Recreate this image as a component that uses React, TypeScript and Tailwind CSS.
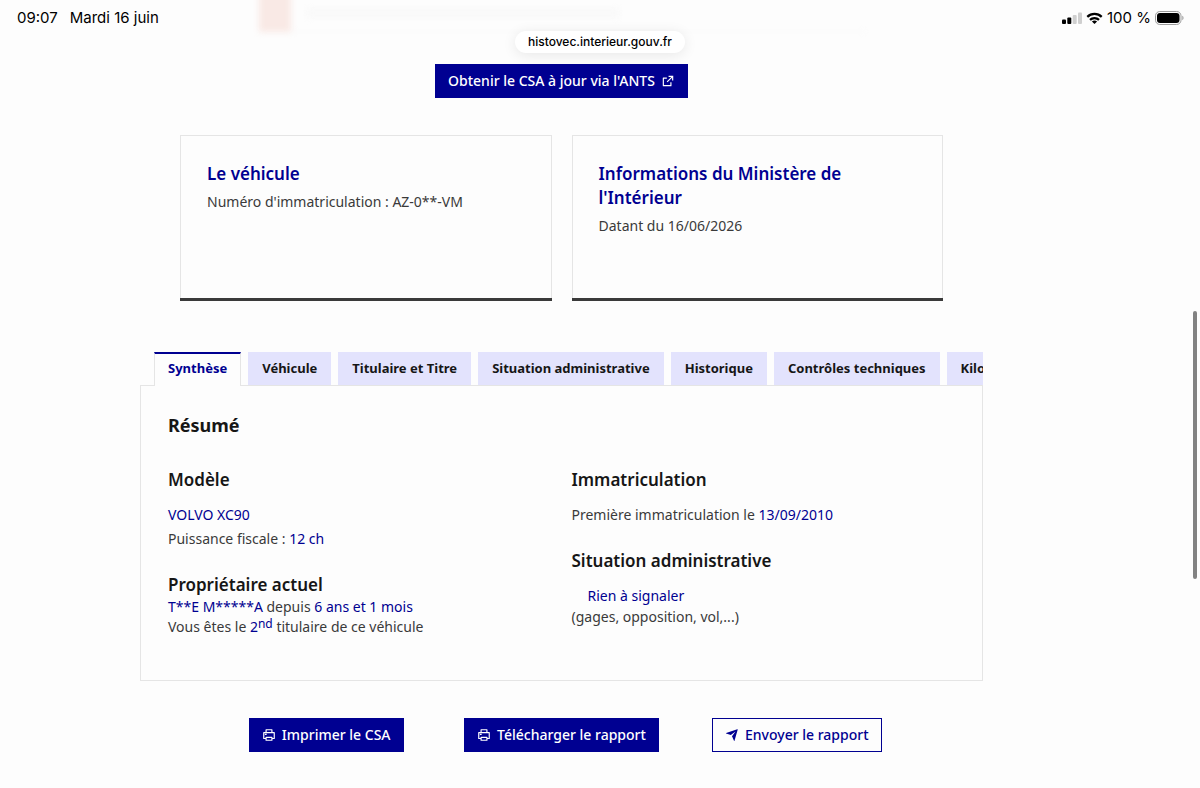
import { useState } from "react";
import type { ReactNode } from "react";

const tabs = [
  "Synthèse",
  "Véhicule",
  "Titulaire et Titre",
  "Situation administrative",
  "Historique",
  "Contrôles techniques",
  "Kilométrage",
];

function Icon({ d }: { d: string }) {
  return (
    <svg viewBox="0 0 24 24" className="mt-[2px] size-[14px] shrink-0" fill="currentColor" aria-hidden="true">
      <path d={d} />
    </svg>
  );
}

const printer =
  "M6 19H3a1 1 0 0 1-1-1V8a1 1 0 0 1 1-1h3V3a1 1 0 0 1 1-1h10a1 1 0 0 1 1 1v4h3a1 1 0 0 1 1 1v10a1 1 0 0 1-1 1h-3v2a1 1 0 0 1-1 1H7a1 1 0 0 1-1-1v-2zm0-2v-1a1 1 0 0 1 1-1h10a1 1 0 0 1 1 1v1h2V9H4v8h2zM8 4v3h8V4H8zm0 13v3h8v-3H8zm-3-7h3v2H5v-2z";
const externalLink =
  "M10 6v2H5v11h11v-5h2v6a1 1 0 0 1-1 1H4a1 1 0 0 1-1-1V7a1 1 0 0 1 1-1h6zm11-3v8h-2V6.413l-7.793 7.794-1.414-1.414L17.585 5H13V3h8z";
const sendPlane =
  "M1.946 9.315c-.522-.174-.527-.455.01-.634l19.087-6.362c.529-.176.832.12.684.638l-5.454 19.086c-.15.529-.455.547-.679.045L12 14l6-8-8 6-8.054-2.685z";

function StatusBar() {
  return (
    <div className="flex h-9 items-center justify-between pr-4 pl-[17px] font-['Inter',sans-serif] text-[15px] text-black">
      <div className="flex gap-3">
        <span>09:07</span>
        <span>Mardi 16 juin</span>
      </div>
      <div className="flex items-center gap-1">
        <svg viewBox="0 0 20 12" className="h-3 w-5" aria-hidden="true">
          <rect x="0" y="7.5" width="4" height="4.5" rx="1" />
          <rect x="5.3" y="5.5" width="4" height="6.5" rx="1" />
          <rect x="10.7" y="3" width="4" height="9" rx="1" fill="#cfcfcf" />
          <rect x="16" y="0.5" width="4" height="11.5" rx="1" fill="#cfcfcf" />
        </svg>
        <svg viewBox="0 0 17 12" className="h-3 w-[17px]" aria-hidden="true">
          <g fill="none" stroke="#000" strokeWidth="2.2">
            <path d="M1.3 4.9a10.3 10.3 0 0 1 14.4 0" />
            <path d="M4 7.9a6.4 6.4 0 0 1 9 0" />
          </g>
          <path d="M8.5 12 5.9 9.6a3.8 3.8 0 0 1 5.2 0z" />
        </svg>
        <span>100 %</span>
        <svg viewBox="0 0 29 14" className="h-[14px] w-[29px]" aria-hidden="true">
          <rect x="0.5" y="0.5" width="25.5" height="13" rx="4.3" fill="none" stroke="#9c9c9c" />
          <rect x="2" y="2" width="22.5" height="10" rx="3" />
          <path d="M27.3 4.8c1.6.5 1.6 3.9 0 4.4z" fill="#9c9c9c" />
        </svg>
      </div>
    </div>
  );
}

function Card({ title, children }: { title: string; children: ReactNode }) {
  return (
    <section className="relative min-h-[166px] border border-[#e5e5e5] px-[26px] pt-[26px] pb-8 after:absolute after:-inset-x-px after:-bottom-px after:h-[3px] after:bg-[#3a3a3a]">
      <h2 className="text-[17px] leading-6 font-semibold text-[#000091]">{title}</h2>
      <p className="mt-1 leading-6">{children}</p>
    </section>
  );
}

function Blue({ children }: { children: ReactNode }) {
  return <span className="text-[#000091]">{children}</span>;
}

const subheading = "text-[17px] leading-6 font-semibold text-[#161616]";
const button =
  "flex h-[34px] items-center gap-1.5 border border-[#000091] px-3 pb-[2px] font-medium whitespace-nowrap";

export default function App() {
  const [active, setActive] = useState(0);
  return (
    <div className="relative min-h-screen overflow-hidden bg-[#fdfdfd] font-['Noto_Sans',sans-serif] text-[14px] text-[#3a3a3a]">
      <div className="absolute -top-2 left-[259px] flex h-10 w-[607px] blur-[3px]" aria-hidden="true">
        <div className="w-8 bg-[#f9e9e5]" />
        <div className="flex-1 border-b border-[#f7f7f7] pt-[17px] pl-4">
          <div className="h-2 w-[312px] bg-[#f8f8f8]" />
        </div>
      </div>
      <header className="relative">
        <StatusBar />
        <div className="absolute top-[31px] left-1/2 -translate-x-1/2 rounded-full bg-white px-[13px] font-['Inter',sans-serif] text-[12px] leading-[22px] font-medium text-black shadow-[0_2px_14px_rgba(0,0,0,0.09)]">
          histovec.interieur.gouv.fr
        </div>
      </header>
      <div className="absolute top-[311px] right-[3px] h-[268px] w-1 rounded-full bg-[#828282]" />

      <main className="pr-[77px] pt-7 pb-9">
        <div className="mx-auto max-w-[843px]">
          <div className="flex justify-center">
            <a href="#ants" className={`${button} bg-[#000091] text-white`}>
              Obtenir le CSA à jour via l'ANTS
              <Icon d={externalLink} />
            </a>
          </div>

          <div className="mt-[37px] grid grid-cols-2 gap-5 px-10">
            <Card title="Le véhicule">Numéro d'immatriculation : AZ-0**-VM</Card>
            <Card title="Informations du Ministère de l'Intérieur">Datant du 16/06/2026</Card>
          </div>

          <div className="mt-[51px]">
            <div role="tablist" className="relative z-10 -mb-px flex gap-[7px] overflow-hidden pl-[14px] text-[13px] font-bold">
              {tabs.map((tab, i) => (
                <button
                  key={tab}
                  type="button"
                  role="tab"
                  aria-selected={i === active}
                  onClick={() => setActive(i)}
                  className={
                    i === active
                      ? "h-[34px] shrink-0 border-x border-t-2 border-x-[#e5e5e5] border-t-[#000091] bg-[#fdfdfd] px-[13px] pb-[3px] text-[#000091]"
                      : "mb-px h-[33px] shrink-0 bg-[#e3e3fd] px-[14px] text-[#161616]"
                  }
                >
                  {tab}
                </button>
              ))}
            </div>

            <div role="tabpanel" className="min-h-[296px] border border-[#e5e5e5] px-[27px] pt-[23px] pb-[41px]">
              <h2 className="text-[18px] leading-8 font-bold text-[#161616]">Résumé</h2>
              <div className="mt-[27px] grid grid-cols-2 gap-5">
                <div>
                  <h3 className={subheading}>Modèle</h3>
                  <p className="mt-[11px] leading-6">
                    <Blue>VOLVO XC90</Blue>
                    <br />
                    Puissance fiscale : <Blue>12 ch</Blue>
                  </p>
                  <h3 className={`${subheading} mt-[22px]`}>Propriétaire actuel</h3>
                  <p className="leading-5">
                    <Blue>T**E M*****A</Blue> depuis <Blue>6 ans et 1 mois</Blue>
                  </p>
                  <p className="leading-5">
                    Vous êtes le{" "}
                    <Blue>
                      2<sup className="-top-1 text-[12px]">nd</sup>
                    </Blue>{" "}
                    titulaire de ce véhicule
                  </p>
                </div>
                <div>
                  <h3 className={subheading}>Immatriculation</h3>
                  <p className="mt-[11px] leading-6">
                    Première immatriculation le <Blue>13/09/2010</Blue>
                  </p>
                  <h3 className={`${subheading} mt-[22px]`}>Situation administrative</h3>
                  <p className="mt-3 pl-4 leading-[21px]">
                    <Blue>Rien à signaler</Blue>
                  </p>
                  <p className="leading-[21px]">(gages, opposition, vol,...)</p>
                </div>
              </div>
            </div>
          </div>

          <div className="mx-auto mt-[37px] grid max-w-[706px] grid-cols-3 justify-items-center">
            <button type="button" className={`${button} bg-[#000091] text-white`}>
              <Icon d={printer} />
              Imprimer le CSA
            </button>
            <button type="button" className={`${button} bg-[#000091] text-white`}>
              <Icon d={printer} />
              Télécharger le rapport
            </button>
            <button type="button" className={`${button} text-[#000091]`}>
              <Icon d={sendPlane} />
              Envoyer le rapport
            </button>
          </div>
        </div>
      </main>
    </div>
  );
}
